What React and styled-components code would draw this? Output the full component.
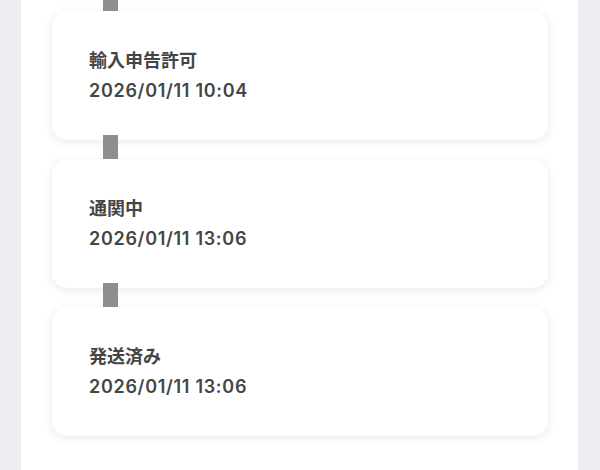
import React from 'react'
import styled, { createGlobalStyle } from 'styled-components'

const GlobalStyle = createGlobalStyle`
  html, body {
    margin: 0;
    padding: 0;
    background: #ececf1;
    overflow: hidden;
  }
`

const Panel = styled.div`
  margin: 0 22px 0 21px;
  min-height: 470px;
  background: #ffffff;
  box-sizing: border-box;
  padding: 11px 30px 30px 31px;
`

const Timeline = styled.div`
  display: flex;
  flex-direction: column;
  gap: 19px;
`

const Item = styled.div`
  position: relative;
`

const Connector = styled.span`
  position: absolute;
  left: 51px;
  top: -24px;
  width: 15px;
  height: 24px;
  background: #8e8e8e;
  z-index: 2;
`

const Card = styled.div`
  height: 129px;
  background: #ffffff;
  border-radius: 15px;
  box-shadow: 0 2px 10px rgba(0, 0, 0, 0.09);
  display: flex;
  flex-direction: column;
  justify-content: center;
  padding-left: 37px;
  font-family: Inter, 'Noto Sans CJK JP', sans-serif;
  font-weight: 600;
  color: #454545;
`

const Title = styled.div`
  font-size: 18px;
  line-height: 30px;
`

const Time = styled.div`
  font-size: 18px;
  line-height: 30px;
  letter-spacing: 0.7px;
`

const steps = [
  { title: '輸入申告許可', time: '2026/01/11 10:04' },
  { title: '通関中', time: '2026/01/11 13:06' },
  { title: '発送済み', time: '2026/01/11 13:06' },
]

export default function App() {
  return (
    <>
      <GlobalStyle />
      <Panel>
        <Timeline>
          {steps.map((s, i) => (
            <Item key={i}>
              <Connector />
              <Card>
                <Title>{s.title}</Title>
                <Time>{s.time}</Time>
              </Card>
            </Item>
          ))}
        </Timeline>
      </Panel>
    </>
  )
}
